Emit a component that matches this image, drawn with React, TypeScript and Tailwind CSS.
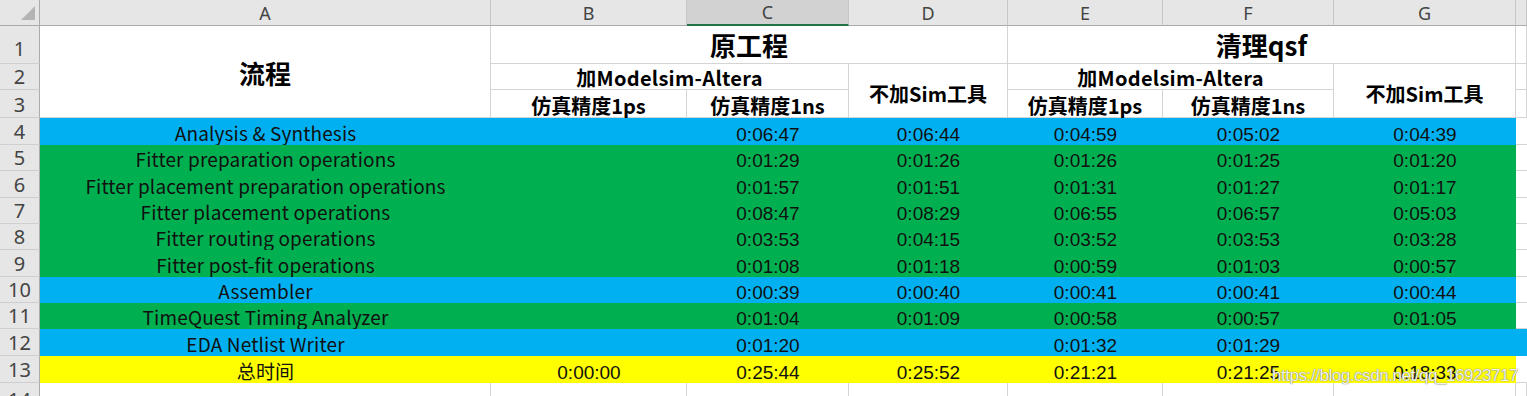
import React from "react";

const FILLS: Record<string, string> = {
  blue: "bg-[#00b0f0]",
  green: "bg-[#00b050]",
  yellow: "bg-[#ffff00]",
};

const ROWS = [
  { label: "Analysis & Synthesis", fill: "blue", v: ["", "0:06:47", "0:06:44", "0:04:59", "0:05:02", "0:04:39"] },
  { label: "Fitter preparation operations", fill: "green", v: ["", "0:01:29", "0:01:26", "0:01:26", "0:01:25", "0:01:20"] },
  { label: "Fitter placement preparation operations", fill: "green", v: ["", "0:01:57", "0:01:51", "0:01:31", "0:01:27", "0:01:17"] },
  { label: "Fitter placement operations", fill: "green", v: ["", "0:08:47", "0:08:29", "0:06:55", "0:06:57", "0:05:03"] },
  { label: "Fitter routing operations", fill: "green", v: ["", "0:03:53", "0:04:15", "0:03:52", "0:03:53", "0:03:28"] },
  { label: "Fitter post-fit operations", fill: "green", v: ["", "0:01:08", "0:01:18", "0:00:59", "0:01:03", "0:00:57"] },
  { label: "Assembler", fill: "blue", v: ["", "0:00:39", "0:00:40", "0:00:41", "0:00:41", "0:00:44"] },
  { label: "TimeQuest Timing Analyzer", fill: "green", v: ["", "0:01:04", "0:01:09", "0:00:58", "0:00:57", "0:01:05"] },
  { label: "EDA Netlist Writer", fill: "blue", v: ["", "0:01:20", "", "0:01:32", "0:01:29", ""], wide: true },
  { label: "总时间", fill: "yellow", v: ["0:00:00", "0:25:44", "0:25:52", "0:21:21", "0:21:25", "0:18:33"] },
];

const COLS = ["A", "B", "C", "D", "E", "F", "G", ""];

const cjk = "font-['Noto_Sans_CJK_SC',sans-serif]";
const num = "font-['Liberation_Sans',Arial,sans-serif]";
const ui = "font-['Noto_Sans',sans-serif]";

function RowHead({ n, className = "" }: { n: number; className?: string }) {
  return (
    <div className={`${ui} flex items-end justify-center border-r border-b border-r-[#ababab] border-b-[#cfcfcf] bg-[#e6e6e6] text-[20px] leading-none text-[#444] pb-[2px] ${className}`}>
      {n}
    </div>
  );
}

function Hd({ children, className = "" }: { children?: React.ReactNode; className?: string }) {
  return (
    <div className={`${cjk} flex justify-center border-r border-b border-[#d4d4d4] bg-white font-bold text-black whitespace-nowrap ${className}`}>
      {children}
    </div>
  );
}

export default function App() {
  return (
    <div className="relative h-[396px] w-[1527px] overflow-hidden bg-white">
      <div className="grid grid-cols-[40px_451px_196px_162px_159px_155px_171px_182px_1fr] grid-rows-[26px_38px_26px_28px_27px_26px_27px_26px_26px_27px_26px_26px_27px_27px_30px]">
        {/* corner */}
        <div className="flex items-end justify-end border-r border-b border-[#ababab] bg-[#e6e6e6] pr-[4px] pb-[5px]">
          <svg width="15" height="14" viewBox="0 0 15 14">
            <polygon points="15,0 15,14 1,14" fill="#b4b4b4" />
          </svg>
        </div>
        {COLS.map((c, i) => (
          <div
            key={i}
            className={`${ui} flex items-center justify-center border-r text-[18px] leading-none text-[#444] ${
              c === "C"
                ? "border-b-2 border-r-[#c6c6c6] border-b-[#217346] bg-[#d2d2d2]"
                : "border-b border-r-[#c6c6c6] border-b-[#ababab] bg-[#e6e6e6]"
            }`}
          >
            {c}
          </div>
        ))}

        {/* header rows 1-3 */}
        <RowHead n={1} className="col-start-1 row-start-2 pb-[4px]" />
        <RowHead n={2} className="col-start-1 row-start-3" />
        <RowHead n={3} className="col-start-1 row-start-4" />

        <Hd className="col-start-2 row-start-2 row-span-3 items-center pt-[2px] text-[26px] leading-none">流程</Hd>
        <Hd className="col-start-3 col-span-3 row-start-2 items-center text-[26px] leading-none">原工程</Hd>
        <Hd className="col-start-6 col-span-3 row-start-2 items-center text-[26px] leading-none">清理qsf</Hd>
        <Hd className="col-start-9 row-start-2" />
        <Hd className="col-start-3 col-span-2 row-start-3 items-end pb-[1px] text-[20px] leading-none tracking-[0.3px]">加Modelsim-Altera</Hd>
        <Hd className="col-start-5 row-start-3 row-span-2 items-center pt-[6px] text-[20px] leading-none">不加Sim工具</Hd>
        <Hd className="col-start-6 col-span-2 row-start-3 items-end pb-[1px] text-[20px] leading-none tracking-[0.3px]">加Modelsim-Altera</Hd>
        <Hd className="col-start-8 row-start-3 row-span-2 items-center pt-[6px] text-[20px] leading-none">不加Sim工具</Hd>
        <Hd className="col-start-9 row-start-3" />
        <Hd className="col-start-3 row-start-4 items-end pb-[1px] text-[20px] leading-none">仿真精度1ps</Hd>
        <Hd className="col-start-4 row-start-4 items-end pb-[1px] text-[20px] leading-none">仿真精度1ns</Hd>
        <Hd className="col-start-6 row-start-4 items-end pb-[1px] text-[20px] leading-none">仿真精度1ps</Hd>
        <Hd className="col-start-7 row-start-4 items-end pb-[1px] text-[20px] leading-none">仿真精度1ns</Hd>
        <Hd className="col-start-9 row-start-4" />

        {/* data rows 4-13 */}
        {ROWS.map((r, ri) => (
          <React.Fragment key={ri}>
            <RowHead n={ri + 4} />
            <div className={`${cjk} flex items-end justify-center ${FILLS[r.fill]} text-[19px] leading-none tracking-[0.15px] text-[#111] whitespace-nowrap pb-[3px]`}>
              {r.label}
            </div>
            {r.v.map((v, vi) => (
              <div key={vi} className={`${num} flex items-end justify-center ${FILLS[r.fill]} text-[19px] leading-none text-[#111] pb-[1px]`}>
                {v}
              </div>
            ))}
            {r.wide ? (
              <div className={FILLS[r.fill]} />
            ) : (
              <div className="border-b border-[#d4d4d4] bg-white" />
            )}
          </React.Fragment>
        ))}

        {/* row 14 */}
        <RowHead n={14} />
        {COLS.map((_, i) => (
          <div key={i} className="border-r border-b border-[#d4d4d4] bg-white" />
        ))}
      </div>

      {/* csdn watermark */}
      <div className={`${num} pointer-events-none absolute left-[1272px] top-[363px] text-[17px] tracking-[-0.45px] text-white/90 [text-shadow:0_0_1px_#7a7a5a,0_0_1px_#7a7a5a]`}>
        https://blog.csdn.net/qq_16923717
      </div>
    </div>
  );
}
